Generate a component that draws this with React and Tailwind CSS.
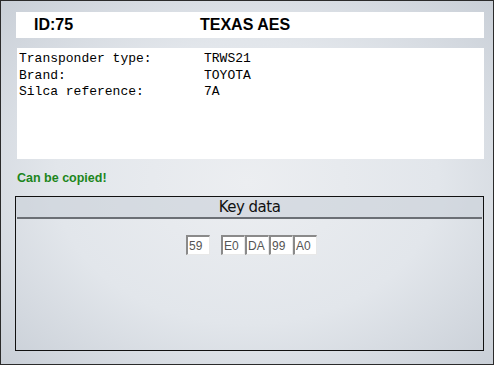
export default function App() {
  const rows = [
    ["Transponder type:", "TRWS21"],
    ["Brand:", "TOYOTA"],
    ["Silca reference:", "7A"],
  ];

  return (
    <div className="relative w-[494px] h-[365px] border border-[#2b2b2b] bg-[radial-gradient(ellipse_at_center,#eceef1_0%,#e2e6eb_55%,#c9cfd7_100%)] font-['Liberation_Sans',Arial,sans-serif] overflow-hidden">
      <div className="flex flex-col pl-[14px] pr-[9px] pt-[11px]">
        {/* Title bar */}
        <div className="ml-px h-[26px] bg-white flex items-center text-[16px] font-bold text-black">
          <span className="ml-[18px] w-[166px]">ID:75</span>
          <span>TEXAS AES</span>
        </div>

        {/* Info panel */}
        <div className="ml-[2px] mt-[10px] h-[111px] bg-white pt-[3px] pl-[2px] font-['Liberation_Mono','Courier_New',monospace] text-[13px] leading-[16.5px] text-black">
          {rows.map(([label, value]) => (
            <div key={label} className="flex">
              <span className="w-[185px]">{label}</span>
              <span>{value}</span>
            </div>
          ))}
        </div>

        <div className="ml-[2px] mt-[11px] text-[12.5px] font-bold text-[#1c861c] leading-[16px]">
          Can be copied!
        </div>

        {/* Key data */}
        <div className="mt-[10px] h-[155px] border border-[#111] flex flex-col">
          <div className="h-[20px] bg-[#c9d0d8]/60 flex items-center justify-center text-[15px] text-[#111] font-['DejaVu_Sans',Tahoma,sans-serif] tracking-[-0.5px]">
            Key data
          </div>
          <div className="mx-px h-[2px] bg-[#6b6f75]" />
          <div className="flex-1">
            <div className="flex mt-[16px] ml-[170px] text-[12px] text-[#555]">
              <Cell v="59" />
              <div className="w-[11px]" />
              <Cell v="E0" />
              <Cell v="DA" />
              <Cell v="99" />
              <Cell v="A0" />
            </div>
          </div>
        </div>
      </div>
    </div>
  );
}

function Cell({ v }) {
  return (
    <div className="w-[24px] h-[20px] bg-white border-t-2 border-l-2 border-b border-r border-t-[#8a8a8a] border-l-[#8a8a8a] border-b-[#e8e8e8] border-r-[#e8e8e8] flex items-center pl-[1px] leading-none">
      {v}
    </div>
  );
}
